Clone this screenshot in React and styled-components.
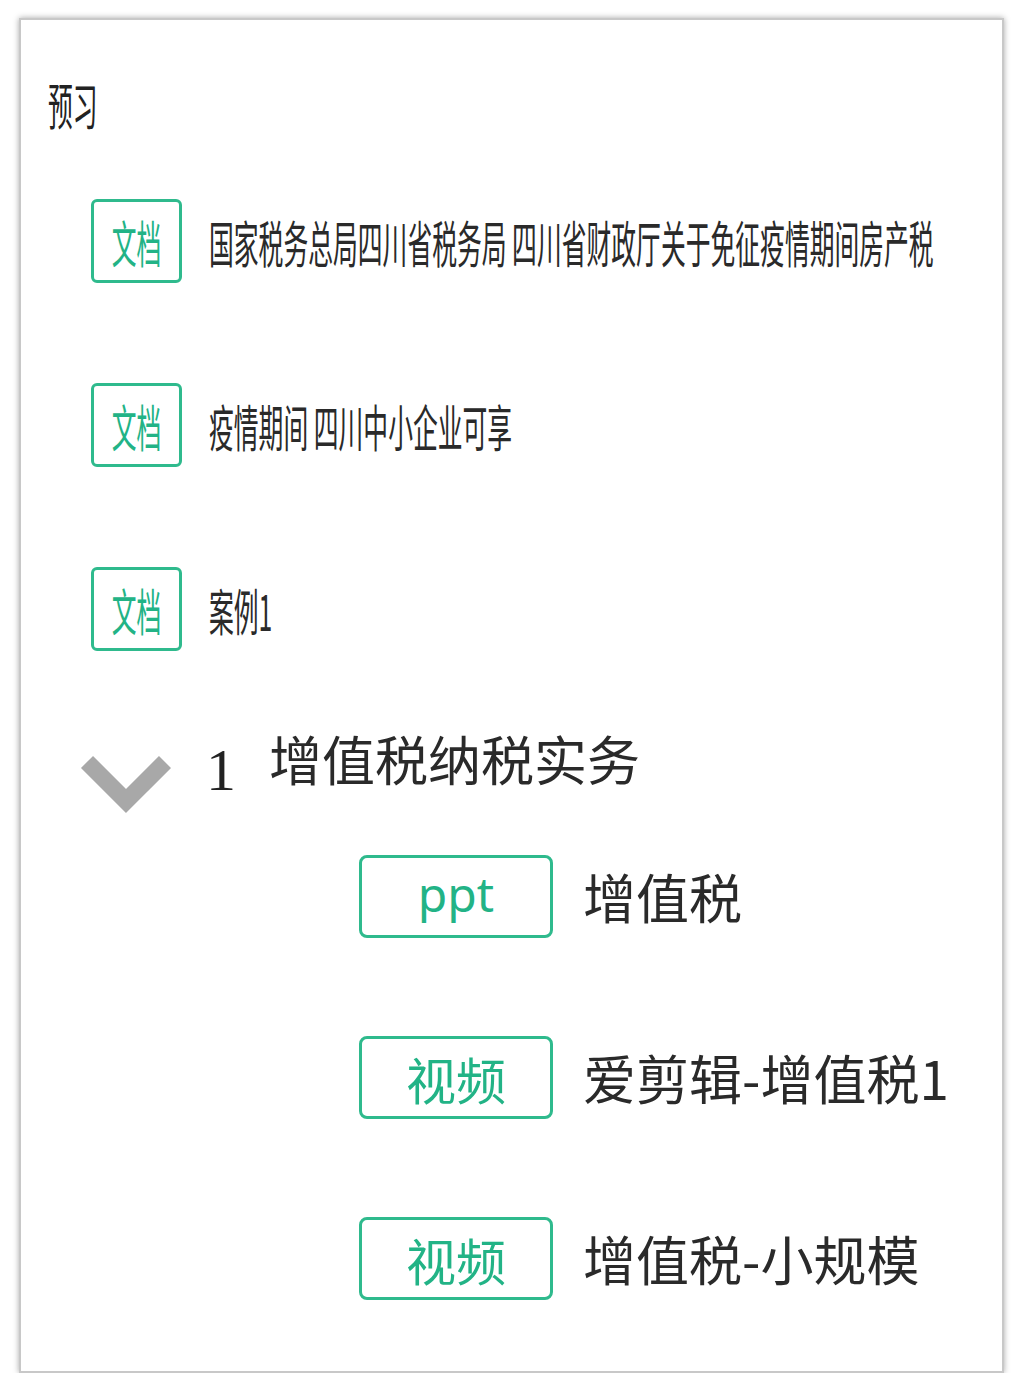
import styled, { createGlobalStyle } from "styled-components";

const GlobalStyle = createGlobalStyle`
  body {
    margin: 0;
    background: #ffffff;
    font-family: "Noto Sans CJK SC", "Noto Sans", sans-serif;
  }
`;

const Card = styled.div`
  box-sizing: border-box;
  width: 985px;
  height: 1355px;
  margin: 18px 0 0 19px;
  padding-top: 58px;
  background: #ffffff;
  border: 2px solid #c8c8c8;
  box-shadow: 0 0 6px rgba(0, 0, 0, 0.35);
`;

/* narrow, tall lettering of the upper list: small type stretched vertically */
const Tall = styled.span`
  display: inline-block;
  white-space: nowrap;
  font-size: 24.8px;
  line-height: 25px;
  transform: scaleY(2);
  transform-origin: center;
`;

const Title = styled.div`
  display: flex;
  align-items: center;
  height: 50px;
  margin-left: 27px;
  color: #222;
`;

const DocList = styled.div`
  display: flex;
  flex-direction: column;
  gap: 100px;
  margin: 71px 0 0 70px;
`;

const DocRow = styled.div`
  display: flex;
  align-items: center;
  height: 84px;
`;

const DocBadge = styled.div`
  box-sizing: border-box;
  width: 91px;
  height: 84px;
  flex-shrink: 0;
  display: flex;
  align-items: center;
  justify-content: center;
  border: 3px solid #2fba8d;
  border-radius: 6px;
  color: #22b386;
`;

const DocName = styled.div`
  display: flex;
  align-items: center;
  margin-left: 27px;
  color: #2a2a2a;
`;

const SectionHead = styled.div`
  display: flex;
  align-items: flex-start;
  margin: 79px 0 0 59px;
`;

const Chevron = styled.svg`
  margin-top: 25px;
  flex-shrink: 0;
`;

const SectionNo = styled.div`
  margin: 10px 0 0 34px;
  font-family: "Liberation Serif", serif;
  font-size: 60px;
  line-height: 60px;
  color: #222;
`;

const SectionName = styled.div`
  margin: 2px 0 0 33px;
  font-size: 53px;
  line-height: 53px;
  color: #2a2a2a;
`;

const ChildList = styled.div`
  display: flex;
  flex-direction: column;
  gap: 98px;
  margin: 40px 0 0 338px;
`;

const ChildRow = styled.div`
  display: flex;
  align-items: center;
  height: 83px;
`;

const ChildBadge = styled.div`
  box-sizing: border-box;
  width: 194px;
  height: 83px;
  flex-shrink: 0;
  display: flex;
  align-items: center;
  justify-content: center;
  border: 3px solid #2fba8d;
  border-radius: 8px;
  color: #22b386;
  font-family: ${(props) =>
    props.latin ? '"Noto Sans", sans-serif' : '"Noto Sans CJK SC", sans-serif'};
  font-size: ${(props) => (props.latin ? "48px" : "50px")};
  line-height: 50px;
  padding-bottom: ${(props) => (props.latin ? "6px" : "0")};
`;

const ChildName = styled.div`
  margin-left: 30px;
  font-size: 53px;
  line-height: 53px;
  color: #2a2a2a;
  white-space: nowrap;
`;

const docs = [
  "国家税务总局四川省税务局 四川省财政厅关于免征疫情期间房产税",
  "疫情期间 四川中小企业可享",
  "案例1",
];

const children = [
  { type: "ppt", name: "增值税" },
  { type: "视频", name: "爱剪辑-增值税1" },
  { type: "视频", name: "增值税-小规模" },
];

const App = () => {
  return (
    <>
      <GlobalStyle />
      <Card>
        <Title>
          <Tall>预习</Tall>
        </Title>
        <DocList>
          {docs.map((doc) => (
            <DocRow key={doc}>
              <DocBadge>
                <Tall>文档</Tall>
              </DocBadge>
              <DocName>
                <Tall>{doc}</Tall>
              </DocName>
            </DocRow>
          ))}
        </DocList>
        <SectionHead>
          <Chevron width="92" height="60" viewBox="0 0 92 60">
            <polyline
              points="7,7 46,46 85,7"
              fill="none"
              stroke="#a8a8a8"
              strokeWidth="17"
              strokeLinejoin="miter"
            />
          </Chevron>
          <SectionNo>1</SectionNo>
          <SectionName>增值税纳税实务</SectionName>
        </SectionHead>
        <ChildList>
          {children.map((item) => (
            <ChildRow key={item.name}>
              <ChildBadge latin={item.type === "ppt"}>{item.type}</ChildBadge>
              <ChildName>{item.name}</ChildName>
            </ChildRow>
          ))}
        </ChildList>
      </Card>
    </>
  );
};

export default App;
